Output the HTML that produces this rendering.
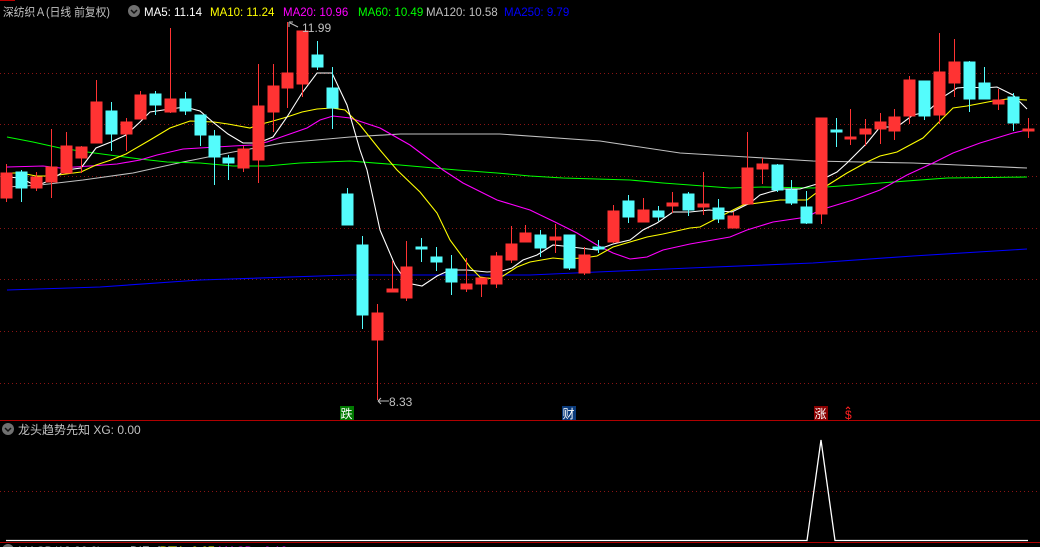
<!DOCTYPE html>
<html><head><meta charset="utf-8"><style>
html,body{margin:0;padding:0;background:#000;width:1040px;height:547px;overflow:hidden}
svg{display:block}
text{font-family:"Liberation Sans","Noto Sans CJK SC",sans-serif;font-size:12px}
.h{font-size:11.5px}
</style></head><body>
<svg width="1040" height="547" viewBox="0 0 1040 547" xmlns="http://www.w3.org/2000/svg">
<rect width="1040" height="547" fill="#000"/>
<g stroke="#8a1414" stroke-width="1" stroke-dasharray="1,3">
<line x1="0" y1="73.5" x2="1040" y2="73.5"/>
<line x1="0" y1="124.5" x2="1040" y2="124.5"/>
<line x1="0" y1="176.5" x2="1040" y2="176.5"/>
<line x1="0" y1="228.5" x2="1040" y2="228.5"/>
<line x1="0" y1="279.5" x2="1040" y2="279.5"/>
<line x1="0" y1="331.5" x2="1040" y2="331.5"/>
<line x1="0" y1="383.5" x2="1040" y2="383.5"/>
<line x1="0" y1="491.5" x2="1040" y2="491.5"/>
</g>
<line x1="0" y1="0.5" x2="15" y2="0.5" stroke="#b00"/>
<g fill="none" stroke-width="1.1">
<polyline stroke="#0000ff" points="7,290 100,287 200,280 350,275 530,275 597,272 690,268 813,263 913,256 1027,249"/>
<polyline stroke="#c0c0c0" points="7,187 40,185 83,180 133,173 183,162 233,152 283,143 350,137 400,134 500,134 600,141 680,153 747,157 813,161 913,163 1027,168"/>
<polyline stroke="#00ff00" points="7,137 33,142 60,148 87,152 117,156 140,159 167,162 200,163 233,166 267,166 300,163 350,161 400,165 457,170 497,173 530,176 563,178 630,180 663,183 690,185 730,188 763,187 813,188 880,183 947,178 1027,177"/>
<polyline stroke="#ff00ff" points="7,167 43,166 60,168 90,166 117,164 140,160 157,155 183,149 233,146 253,145 267,142 287,135 307,128 320,120 333,116 350,118 380,128 410,145 430,160 443,170 463,183 497,200 530,210 557,223 577,233 597,245 613,253 630,259 647,257 663,250 690,244 730,237 747,230 773,222 807,217 820,210 853,200 880,190 907,175 933,163 953,153 980,143 1013,133 1027,130"/>
<polyline stroke="#ffff00" points="6,173 21,173 36,176 51,176 66,174 81,172 96,165 111,160 126,154 150,140 170,128 190,121 214,122 228,124 250,128 258,125 273,121 287,117 302,112 317,109 332,108 345,110 360,125 380,150 397,170 420,192 437,213 450,240 470,267 480,277 495,279 503,276 517,267 530,262 553,258 563,259 583,258 597,256 613,247 630,242 647,237 663,234 690,228 700,227 733,210 743,205 780,200 807,200 820,190 847,173 867,162 880,156 897,152 923,138 953,108 967,106 993,101 1007,99 1027,100"/>
<polyline stroke="#ffffff" points="6,177 21,178 36,186 51,180 66,170 81,168 96,148 111,142 126,135 140,122 150,112 170,109 185,107 200,111 214,123 228,134 243,143 258,143 273,137 287,117 302,93 317,73 332,73 347,105 360,150 367,170 380,230 395,265 407,283 422,286 437,276 450,270 467,270 487,272 502,271 512,268 523,260 537,255 553,245 563,246 580,248 597,250 613,244 630,240 643,230 657,223 673,212 690,212 709,210 732,212 750,203 760,195 770,192 783,189 800,189 817,184 827,177 837,172 847,163 867,143 880,127 897,127 913,115 927,112 943,97 957,88 970,87 983,88 997,87 1013,95 1027,109"/>
</g>
<g fill="#ff3333" stroke="#ff3333">
<path d="M6.5,164V202M36.5,172V191M51.5,129V198M66.5,132V173M81.5,146V173M96.5,80V143M126.5,118V151M140.5,91V119M170.5,28V113M243.5,146V172M258.5,64V183M273.5,64V132M287.5,22V108M302.5,31V97M377.5,304V400M392.5,261V292M406.5,241V301M466.5,258V292M481.5,278V297M496.5,252V288M511.5,226V263M525.5,225V242M555.5,224V253M584.5,247V275M613.5,205V243M643.5,198V222M672.5,192V213M703.5,172V215M733.5,212V228M747.5,132V204M762.5,158V184M821.5,118V224M850.5,109V145M865.5,119V146M880.5,113V144M894.5,109V140M909.5,76V124M939.5,33V124M954.5,39V97M998.5,89V110M1028.5,118V138"/>
<rect x="1" y="173" width="11" height="25"/><rect x="31" y="177" width="11" height="11"/><rect x="46" y="167" width="11" height="15"/><rect x="61" y="146" width="11" height="27"/><rect x="76" y="147" width="11" height="11"/><rect x="91" y="102" width="11" height="41"/><rect x="121" y="122" width="11" height="12"/><rect x="135" y="95" width="11" height="24"/><rect x="165" y="99" width="11" height="13"/><rect x="238" y="149" width="11" height="19"/><rect x="253" y="106" width="11" height="54"/><rect x="268" y="86" width="11" height="26"/><rect x="282" y="73" width="11" height="15"/><rect x="297" y="31" width="11" height="53"/><rect x="372" y="313" width="11" height="27"/><rect x="387" y="289" width="11" height="3"/><rect x="401" y="267" width="11" height="31"/><rect x="461" y="284" width="11" height="5"/><rect x="476" y="278" width="11" height="6"/><rect x="491" y="256" width="11" height="28"/><rect x="506" y="244" width="11" height="16"/><rect x="520" y="233" width="11" height="9"/><rect x="550" y="237" width="11" height="3"/><rect x="579" y="255" width="11" height="18"/><rect x="608" y="211" width="11" height="31"/><rect x="638" y="210" width="11" height="12"/><rect x="667" y="203" width="11" height="3"/><rect x="698" y="204" width="11" height="3"/><rect x="728" y="216" width="11" height="12"/><rect x="742" y="168" width="11" height="36"/><rect x="757" y="164" width="11" height="5"/><rect x="816" y="118" width="11" height="96"/><rect x="845" y="137" width="11" height="2"/><rect x="860" y="129" width="11" height="5"/><rect x="875" y="122" width="11" height="7"/><rect x="889" y="117" width="11" height="14"/><rect x="904" y="80" width="11" height="36"/><rect x="934" y="72" width="11" height="43"/><rect x="949" y="62" width="11" height="21"/><rect x="993" y="100" width="11" height="4"/><rect x="1023" y="129" width="11" height="2"/>
</g>
<g fill="#54fcfc" stroke="#54fcfc">
<path d="M21.5,170V202M111.5,102V151M155.5,91V115M185.5,92V115M200.5,115V146M214.5,130V185M228.5,155V180M317.5,41V70M332.5,67V129M347.5,188V225M362.5,236V329M421.5,238V262M436.5,247V271M451.5,255V295M540.5,230V257M569.5,235V270M598.5,240V253M628.5,195V223M658.5,206V221M688.5,192V216M718.5,199V223M777.5,164V192M791.5,180V205M806.5,191V224M836.5,118V147M924.5,81V120M969.5,61V112M984.5,67V99M1013.5,93V131"/>
<rect x="16" y="172" width="11" height="16"/><rect x="106" y="111" width="11" height="23"/><rect x="150" y="94" width="11" height="11"/><rect x="180" y="99" width="11" height="12"/><rect x="195" y="115" width="11" height="20"/><rect x="209" y="136" width="11" height="21"/><rect x="223" y="158" width="11" height="5"/><rect x="312" y="55" width="11" height="12"/><rect x="327" y="88" width="11" height="20"/><rect x="342" y="194" width="11" height="31"/><rect x="357" y="245" width="11" height="70"/><rect x="416" y="247" width="11" height="2"/><rect x="431" y="257" width="11" height="5"/><rect x="446" y="269" width="11" height="13"/><rect x="535" y="235" width="11" height="13"/><rect x="564" y="235" width="11" height="33"/><rect x="593" y="247" width="11" height="2"/><rect x="623" y="201" width="11" height="16"/><rect x="653" y="211" width="11" height="6"/><rect x="683" y="194" width="11" height="16"/><rect x="713" y="208" width="11" height="11"/><rect x="772" y="165" width="11" height="25"/><rect x="786" y="190" width="11" height="13"/><rect x="801" y="207" width="11" height="16"/><rect x="831" y="130" width="11" height="2"/><rect x="919" y="81" width="11" height="35"/><rect x="964" y="62" width="11" height="37"/><rect x="979" y="83" width="11" height="16"/><rect x="1008" y="97" width="11" height="26"/>
</g>
<path d="M289,22 l0,5 M289,22 l4,0 M290,23 l8,4" stroke="#c0c0c0" fill="none"/>
<text x="302" y="32" fill="#c0c0c0" font-size="13">11.99</text>
<path d="M378,401 l11,0 M378,401 l3,-3 M378,401 l3,3" stroke="#c0c0c0" fill="none"/>
<text x="389" y="406" fill="#c0c0c0" font-size="13">8.33</text>
<rect x="340" y="406" width="14" height="14" fill="#007a00"/>
<text x="340.5" y="418" fill="#fff">跌</text>
<rect x="562" y="406" width="14" height="14" fill="#0a3a7a"/>
<text x="562.5" y="418" fill="#fff">财</text>
<rect x="814" y="406" width="14" height="14" fill="#8a0000"/>
<text x="814.5" y="418" fill="#fff">涨</text>
<text x="845" y="419" fill="#ff2020">$</text>
<path d="M846,409 l2,-2 l2,2" stroke="#ff2020" fill="none"/>
<text class="h" x="3" y="16" fill="#c0c0c0" textLength="107" lengthAdjust="spacingAndGlyphs">深纺织Ａ(日线 前复权)</text>
<circle cx="134" cy="11" r="6" fill="#707070"/>
<path d="M131,10 l3,3 l3,-3" stroke="#111" stroke-width="1.5" fill="none"/>
<text class="h" x="144" y="16" fill="#ffffff">MA5: 11.14</text>
<text class="h" x="210" y="16" fill="#ffff00">MA10: 11.24</text>
<text class="h" x="283" y="16" fill="#ff00ff">MA20: 10.96</text>
<text class="h" x="358" y="16" fill="#00ff00">MA60: 10.49</text>
<text class="h" x="426" y="16" fill="#c0c0c0">MA120: 10.58</text>
<text class="h" x="504" y="16" fill="#0000ff">MA250: 9.79</text>
<line x1="0" y1="420.5" x2="1040" y2="420.5" stroke="#b00000"/>
<circle cx="8" cy="429" r="6" fill="#707070"/>
<path d="M5,428 l3,3 l3,-3" stroke="#111" stroke-width="1.5" fill="none"/>
<text x="18" y="434" fill="#c0c0c0">龙头趋势先知 XG: 0.00</text>
<polyline points="6,540.5 807,540.5 821,440 835,540.5 1028,540.5" stroke="#fff" stroke-width="1.3" fill="none"/>
<line x1="0" y1="542.5" x2="1040" y2="542.5" stroke="#b00000"/>
<circle cx="8" cy="550" r="6" fill="#707070"/>
<text x="18" y="555" fill="#c0c0c0">MACD(12,26,9)</text>
<text x="130" y="555" fill="#fff">DIF: 0.01</text>
<text x="160" y="555" fill="#ffff00">DEA: 0.07</text>
<text x="218" y="555" fill="#ff00ff">MACD: -0.12</text>
</svg>
</body></html>
